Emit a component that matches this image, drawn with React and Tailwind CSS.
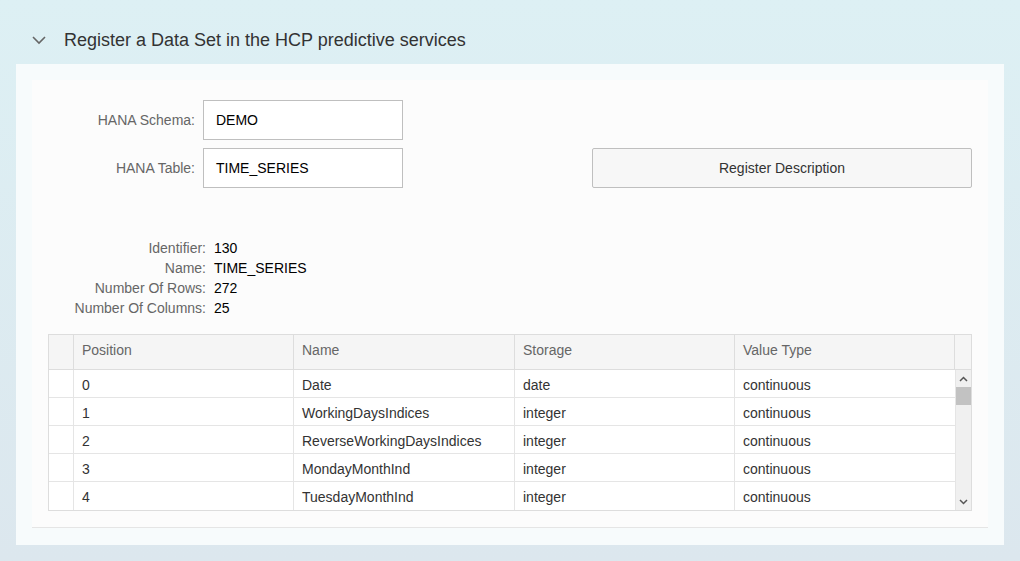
import React from 'react';

const rows = [
  ['0', 'Date', 'date', 'continuous'],
  ['1', 'WorkingDaysIndices', 'integer', 'continuous'],
  ['2', 'ReverseWorkingDaysIndices', 'integer', 'continuous'],
  ['3', 'MondayMonthInd', 'integer', 'continuous'],
  ['4', 'TuesdayMonthInd', 'integer', 'continuous'],
];

const info = [
  ['Identifier:', '130'],
  ['Name:', 'TIME_SERIES'],
  ['Number Of Rows:', '272'],
  ['Number Of Columns:', '25'],
];

export default function App() {
  return (
    <div className="w-[1020px] h-[561px] overflow-hidden bg-gradient-to-b from-[#ddf0f4] to-[#dce7ee] font-['Liberation_Sans',Arial,sans-serif] text-[#333]">
      {/* Panel header */}
      <div className="h-[64px] flex items-end pb-[13px] pl-[32px]">
        <svg width="14" height="14" viewBox="0 0 14 14" className="mb-[4px]">
          <path d="M1 4 L7 10 L13 4" fill="none" stroke="#666" strokeWidth="1.6" />
        </svg>
        <span className="ml-[18px] text-[18px] leading-[22px] text-[#333]">Register a Data Set in the HCP predictive services</span>
      </div>

      {/* Panel body */}
      <div className="mx-[16px] h-[481px] bg-[#f7fbfc] p-[16px] pb-[17px]">
        <div className="h-[448px] bg-[#fcfcfc] border-b border-[#e5e5e5] px-[16px] pt-[20px]">
          {/* Form */}
          <div className="flex flex-col gap-[8px]">
            <div className="flex items-center">
              <label className="w-[155px] shrink-0 text-right text-[14px] text-[#666] pr-[8px]">HANA Schema:</label>
              <div className="w-[200px] shrink-0 h-[40px] border border-[#bfbfbf] bg-white flex items-center px-[12px] text-[14px] text-black">DEMO</div>
            </div>
            <div className="flex items-center">
              <label className="w-[155px] shrink-0 text-right text-[14px] text-[#666] pr-[8px]">HANA Table:</label>
              <div className="w-[200px] shrink-0 h-[40px] border border-[#bfbfbf] bg-white flex items-center px-[12px] text-[14px] text-black">TIME_SERIES</div>
              <button className="ml-[189px] shrink-0 w-[380px] h-[40px] border border-[#bfbfbf] rounded-[2px] bg-[#f7f7f7] text-[14px] text-[#333]">Register Description</button>
            </div>
          </div>

          {/* Info */}
          <div className="mt-[50px] flex flex-col">
            {info.map(([k, v]) => (
              <div key={k} className="flex h-[20px] items-center text-[14px]">
                <span className="w-[166px] shrink-0 text-right text-[#666] pr-[8px]">{k}</span>
                <span className="text-black">{v}</span>
              </div>
            ))}
          </div>

          {/* Table */}
          <div className="mt-[16px] w-[924px] border border-[#ddd] bg-white text-[14px]">
            <div className="flex h-[35px] bg-[#f5f5f5] border-b border-[#ddd] text-[#666]">
              <div className="w-[25px] border-r border-[#ddd]" />
              <div className="w-[220px] border-r border-[#ddd] pl-[8px] pb-[3px] flex items-center">Position</div>
              <div className="w-[221px] border-r border-[#ddd] pl-[8px] pb-[3px] flex items-center">Name</div>
              <div className="w-[220px] border-r border-[#ddd] pl-[8px] pb-[3px] flex items-center">Storage</div>
              <div className="w-[220px] border-r border-[#ddd] pl-[8px] pb-[3px] flex items-center">Value Type</div>
              <div className="flex-1" />
            </div>
            <div className="flex">
              <div className="flex-1 flex flex-col">
                {rows.map((r, i) => (
                  <div key={i} className={`flex h-[28px] text-[#333] ${i < rows.length - 1 ? 'border-b border-[#e5e5e5]' : ''}`}>
                    <div className="w-[25px] border-r border-[#e5e5e5]" />
                    <div className="w-[220px] border-r border-[#e5e5e5] pl-[8px] pt-[3px] flex items-center">{r[0]}</div>
                    <div className="w-[221px] border-r border-[#e5e5e5] pl-[8px] pt-[3px] flex items-center">{r[1]}</div>
                    <div className="w-[220px] border-r border-[#e5e5e5] pl-[8px] pt-[3px] flex items-center">{r[2]}</div>
                    <div className="flex-1 pl-[8px] pt-[3px] flex items-center">{r[3]}</div>
                  </div>
                ))}
              </div>
              {/* Scrollbar */}
              <div className="w-[16px] bg-[#f0f0f0] border-l border-[#e5e5e5] flex flex-col items-center">
                <svg width="9" height="6" viewBox="0 0 9 6" className="mt-[6px]">
                  <path d="M1 5 L4.5 1.5 L8 5" fill="none" stroke="#555" strokeWidth="1.5" />
                </svg>
                <div className="mt-[5px] w-[15px] h-[18px] bg-[#c2c2c2]" />
                <div className="flex-1" />
                <svg width="9" height="6" viewBox="0 0 9 6" className="mb-[5px]">
                  <path d="M1 1 L4.5 4.5 L8 1" fill="none" stroke="#555" strokeWidth="1.5" />
                </svg>
              </div>
            </div>
          </div>
        </div>
      </div>
    </div>
  );
}
